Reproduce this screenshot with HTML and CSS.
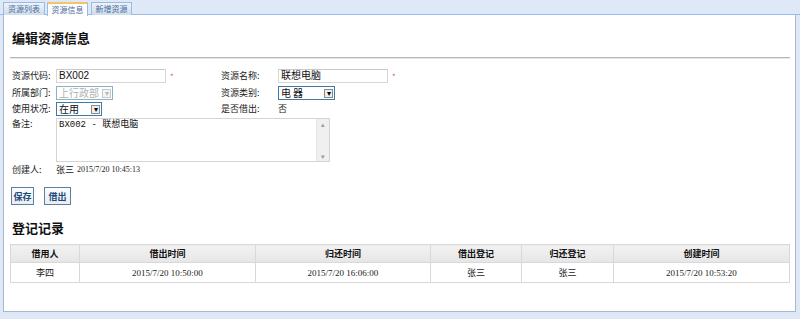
FILE: index.html
```html
<!DOCTYPE html>
<html lang="zh">
<head>
<meta charset="utf-8">
<title>编辑资源信息</title>
<link rel="stylesheet" href="styles.css">
</head>
<body>
<div class="tabs">
  <div class="tab">资源列表</div>
  <div class="tab active">资源信息</div>
  <div class="tab">新增资源</div>
</div>
<div class="panel">
  <h1 class="title">编辑资源信息</h1>
  <div class="rule"></div>
  <div class="form">
    <div class="lbl">资源代码:</div>
    <div class="fld"><span class="input w110">BX002</span><span class="req">*</span></div>
    <div class="lbl">资源名称:</div>
    <div class="fld"><span class="input w110">联想电脑</span><span class="req">*</span></div>

    <div class="lbl">所属部门:</div>
    <div class="fld"><span class="select disabled w57"><span class="sel-text">上行政部</span><span class="sel-btn">▾</span></span></div>
    <div class="lbl">资源类别:</div>
    <div class="fld"><span class="select blue w57"><span class="sel-text spaced">电器</span><span class="sel-btn">▾</span></span></div>

    <div class="lbl">使用状况:</div>
    <div class="fld"><span class="select blue w47"><span class="sel-text">在用</span><span class="sel-btn">▾</span></span></div>
    <div class="lbl">是否借出:</div>
    <div class="fld">否</div>

    <div class="lbl top">备注:</div>
    <div class="fld area-cell">
      <div class="textarea">
        <div class="ta-text">BX002 - 联想电脑</div>
        <div class="ta-scroll"><span class="arr">▴</span><span class="arr">▾</span></div>
      </div>
    </div>

    <div class="lbl">创建人:</div>
    <div class="fld wide"><span>张三</span><span class="num gap">2015/7/20 10:45:13</span></div>
  </div>
  <div class="buttons">
    <button class="btn">保存</button>
    <button class="btn">借出</button>
  </div>
  <h2 class="title sub">登记记录</h2>
  <table class="grid">
    <colgroup>
      <col style="width:69px"><col style="width:176px"><col style="width:175px"><col style="width:91px"><col style="width:92px"><col style="width:176px">
    </colgroup>
    <thead>
      <tr><th>借用人</th><th>借出时间</th><th>归还时间</th><th>借出登记</th><th>归还登记</th><th>创建时间</th></tr>
    </thead>
    <tbody>
      <tr><td>李四</td><td class="num">2015/7/20 10:50:00</td><td class="num">2015/7/20 16:06:00</td><td>张三</td><td>张三</td><td class="num">2015/7/20 10:53:20</td></tr>
    </tbody>
  </table>
</div>
</body>
</html>
```

FILE: styles.css
```css
html, body {
  margin: 0;
  padding: 0;
}
body {
  background: #dfe8f6;
  font-family: "Noto Sans CJK SC", "Noto Sans", sans-serif;
  font-size: 9px;
  color: #222;
  width: 800px;
  height: 319px;
  overflow: hidden;
}
.tabs {
  display: flex;
  gap: 2px;
  padding: 2px 0 0 3px;
  height: 15px;
  box-sizing: border-box;
  border-bottom: 1px solid #99bbe8;
}
.tab {
  width: 42px;
  height: 13px;
  box-sizing: border-box;
  border: 1px solid #99bbe8;
  border-bottom: none;
  background: linear-gradient(#eef3fa, #cfdcec);
  color: #4a6b9a;
  font-size: 8px;
  line-height: 12px;
  text-align: center;
}
.tab.active {
  width: 41px;
  background: #fff;
  border-top: 2px solid #f4c46a;
  height: 14px;
  line-height: 11px;
  margin-bottom: -1px;
}
.tab:last-child { margin-left: 1px; width: 41px; }
.panel {
  margin: 0 4px 0 3px;
  height: 297px;
  box-sizing: border-box;
  background: #fff;
  border: 1px solid #a8b8cc;
  border-top: none;
  padding: 15px 5px 0 6px;
}
.title {
  margin: 0 0 0 2px;
  font-size: 13px;
  line-height: 16px;
  font-weight: bold;
  color: #111;
}
.rule {
  margin-top: 11px;
  height: 1px;
  border-top: 1px solid #b9b9b9;
  background: #e6e6e6;
}
.form {
  margin: 10px 0 0 2px;
  display: grid;
  grid-template-columns: 44px 165px 57px 1fr;
  grid-template-rows: 17px 16px 16px 45px 14px;
  align-items: start;
}
.lbl {
  height: 14px;
  line-height: 14px;
  white-space: nowrap;
}
.lbl.top { line-height: 12px; }
.fld {
  display: flex;
  align-items: center;
  height: 14px;
  line-height: 14px;
  white-space: nowrap;
}
.fld.wide { grid-column: 2 / 5; }
.area-cell {
  grid-column: 2 / 5;
  height: 44px;
}
.input {
  display: inline-block;
  height: 14px;
  box-sizing: border-box;
  border: 1px solid #d6d6d6;
  border-top-color: #c9c9c9;
  padding: 0 2px;
  line-height: 12px;
  font-size: 10px;
  font-family: "Liberation Sans", "Noto Sans CJK SC", sans-serif;
  color: #111;
}
.w110 { width: 110px; }
.w57 { width: 57px; }
.w47 { width: 46px; }
.req {
  color: #e05a5a;
  font-size: 8px;
  margin-left: 4px;
  line-height: 8px;
  height: 6px;
}
.select {
  display: inline-flex;
  height: 14px;
  box-sizing: border-box;
  border: 1px solid #3d7aa8;
  background: #fff;
  align-items: center;
  padding: 0 1px 0 2px;
}
.select.disabled {
  border-color: #86b4c4;
  color: #a9a9a9;
}
.sel-text {
  flex: 1;
  font-size: 10px;
  line-height: 12px;
  color: #111;
}
.select.disabled .sel-text { color: #b0b0b0; }
.sel-text.spaced { letter-spacing: 2px; }
.sel-btn {
  width: 9px;
  height: 9px;
  box-sizing: border-box;
  border: 1px solid #8a8a8a;
  background: #eee;
  font-size: 8px;
  line-height: 6px;
  text-align: center;
  color: #000;
}
.select.disabled .sel-btn {
  border-color: #c8c8c8;
  color: #bbb;
  background: #f4f4f4;
}
.textarea {
  width: 274px;
  height: 44px;
  box-sizing: border-box;
  border: 1px solid #d4d4d4;
  display: flex;
}
.ta-text {
  flex: 1;
  padding: 1px 2px;
  font-family: "Liberation Mono", "Noto Sans CJK SC", monospace;
  font-size: 9px;
  line-height: 11px;
  color: #111;
}
.ta-scroll {
  width: 12px;
  background: #f0f0f0;
  border-left: 1px solid #e4e4e4;
  display: flex;
  flex-direction: column;
  justify-content: space-between;
  align-items: center;
  color: #9a9a9a;
  font-size: 7px;
  line-height: 10px;
}
.num {
  font-family: "Liberation Serif", serif;
  font-size: 8px;
}
.gap { margin-left: 3px; }
.buttons {
  display: flex;
  gap: 10px;
  margin: 10px 0 0 1px;
}
.btn {
  width: 23px;
  height: 18px;
  padding: 0;
  box-sizing: border-box;
  border: 1px solid #5f7f9f;
  background: linear-gradient(#fbfcfd, #e8eef4);
  font-family: "Noto Sans CJK SC", serif;
  font-size: 9px;
  font-weight: bold;
  color: #1f4b78;
}
.btn + .btn { width: 27px; }
.sub {
  margin-top: 15px;
}
.grid {
  margin-top: 8px;
  width: 779px;
  border-collapse: collapse;
  table-layout: fixed;
}
.grid th, .grid td {
  border: 1px solid #d9d9d9;
  text-align: center;
  padding: 0;
}
.grid th {
  height: 17px;
  background: linear-gradient(#f2f2f2, #e6e6e6);
  font-weight: bold;
  font-size: 9px;
  color: #111;
}
.grid td {
  height: 19px;
  font-size: 9px;
}
```
